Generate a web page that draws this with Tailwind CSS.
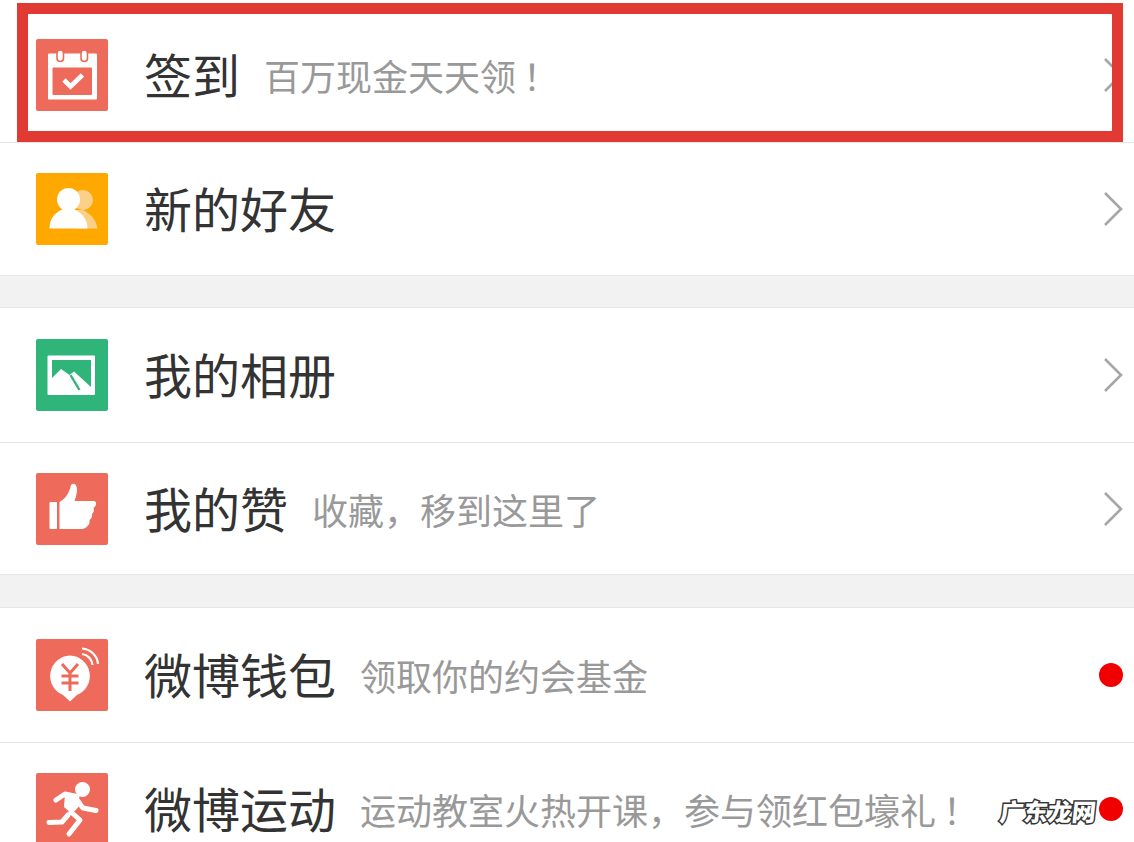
<!DOCTYPE html>
<html lang="zh-CN">
<head>
<meta charset="utf-8">
<script src="https://cdn.jsdelivr.net/npm/@tailwindcss/browser@4"></script>
</head>
<body class="bg-white">
<div class="relative h-[842px] w-[1134px] overflow-hidden bg-white font-['Noto_Sans_CJK_SC','Noto_Sans',sans-serif] text-[#333]">

  <div class="flex h-[143px] items-center border-b border-[#e6e6e6] pt-2 pl-9 pr-[11px]">
    <div class="flex size-[72px] shrink-0 items-center justify-center rounded-[2px] bg-[#ee6a5a]">
      <svg viewBox="0 0 72 72" class="size-[72px]">
        <rect x="12" y="14.5" width="49" height="46" rx="1" fill="#fff"/>
        <rect x="16.5" y="28.5" width="39.5" height="27.5" rx="1" fill="#ee6a5a"/>
        <rect x="21" y="11" width="6.5" height="11.5" rx="3.2" fill="#fff" stroke="#ee6a5a" stroke-width="1.6"/>
        <rect x="45" y="11" width="6.5" height="11.5" rx="3.2" fill="#fff" stroke="#ee6a5a" stroke-width="1.6"/>
        <path d="M28 41 L34.5 47.5 L46.5 36" fill="none" stroke="#fff" stroke-width="4.6"/>
      </svg>
    </div>
    <span class="mb-[5px] ml-[36px] shrink-0 text-[48px] leading-none">签到</span>
    <span class="mb-[1px] ml-[24px] shrink-0 text-[36px] leading-none text-[#999]">百万现金天天领<span class="ml-[7px]">！</span></span>
    <svg viewBox="0 0 20 36" class="ml-auto h-[36px] w-[20px] shrink-0"><path d="M2 2 L18 18 L2 34" fill="none" stroke="#a6a6a6" stroke-width="2.6"/></svg>
  </div>

  <div class="flex h-[133px] items-center border-b border-[#e6e6e6] pl-9 pr-[11px]">
    <div class="size-[72px] shrink-0 rounded-[2px] bg-[#ffa800]">
      <svg viewBox="0 0 72 72" class="size-[72px]">
        <circle cx="47" cy="27" r="10" fill="#fdd08a"/>
        <path d="M40 55.5 H61.5 C60 47 55 41 47 37 L36 37 Z" fill="#fdd08a"/>
        <circle cx="32.5" cy="26.5" r="11.5" fill="#fff"/>
        <path d="M13.5 55.5 C13.5 47 17 41 26 36.5 H39 C47 41 51.5 47 51.5 55.5 Z" fill="#fff"/>
      </svg>
    </div>
    <span class="mb-[4px] ml-[36px] shrink-0 text-[48px] leading-none">新的好友</span>
    <svg viewBox="0 0 20 36" class="ml-auto h-[36px] w-[20px] shrink-0"><path d="M2 2 L18 18 L2 34" fill="none" stroke="#a6a6a6" stroke-width="2.6"/></svg>
  </div>

  <div class="h-[32px] border-b border-[#e6e6e6] bg-[#f2f2f2]"></div>

  <div class="flex h-[135px] items-center border-b border-[#e6e6e6] pl-9 pr-[11px]">
    <div class="size-[72px] shrink-0 rounded-[2px] bg-[#2fb57a]">
      <svg viewBox="0 0 72 72" class="size-[72px]">
        <rect x="11.5" y="16.5" width="47.5" height="39.5" rx="1" fill="#fff"/>
        <path d="M16 21 H55 V48 L38 32.5 L33.5 36 L25 30 L16 39 Z" fill="#2fb57a"/>
        <path d="M34.5 36 L43.5 51" fill="none" stroke="#2fb57a" stroke-width="2.4"/>
      </svg>
    </div>
    <span class="mb-[4px] ml-[36px] shrink-0 text-[48px] leading-none">我的相册</span>
    <svg viewBox="0 0 20 36" class="ml-auto h-[36px] w-[20px] shrink-0"><path d="M2 2 L18 18 L2 34" fill="none" stroke="#a6a6a6" stroke-width="2.6"/></svg>
  </div>

  <div class="flex h-[132px] items-center border-b border-[#e6e6e6] pl-9 pr-[11px]">
    <div class="size-[72px] shrink-0 rounded-[2px] bg-[#ee6a5a]">
      <svg viewBox="0 0 72 72" class="size-[72px]">
        <rect x="13.5" y="29" width="7.5" height="27" rx="1" fill="#fff"/>
        <path d="M23.5 29 C29 26 33 21 35 12 C37 9.5 41 11 41 16 C41 21 39.5 25 38.5 28 H58 C60.5 28.5 60.5 31 59.5 33 L57.5 35 C58.5 37 58 39 56 41 C56.5 43.5 55.5 45.5 53.5 47 C54 50 53 52 50.5 54 C49 55.5 47 56 45 56 H23.5 Z" fill="#fff"/>
      </svg>
    </div>
    <span class="mb-[4px] ml-[36px] shrink-0 text-[48px] leading-none">我的赞</span>
    <span class="ml-[24px] shrink-0 text-[36px] leading-none text-[#999]">收藏，移到这里了</span>
    <svg viewBox="0 0 20 36" class="ml-auto h-[36px] w-[20px] shrink-0"><path d="M2 2 L18 18 L2 34" fill="none" stroke="#a6a6a6" stroke-width="2.6"/></svg>
  </div>

  <div class="h-[33px] border-b border-[#e6e6e6] bg-[#f2f2f2]"></div>

  <div class="flex h-[135px] items-center border-b border-[#e6e6e6] pl-9 pr-[11px]">
    <div class="size-[72px] shrink-0 rounded-[2px] bg-[#ee6a5a]">
      <svg viewBox="0 0 72 72" class="size-[72px]">
        <path d="M34 16.5 A20.5 20.5 0 0 1 41 56 L34 62.5 L27 56 A20.5 20.5 0 0 1 34 16.5 Z" fill="#fff"/>
        <path d="M46 9.5 A17 17 0 0 1 62 25" fill="none" stroke="#fff" stroke-width="2.2"/>
        <path d="M46 15 A12 12 0 0 1 56.5 26" fill="none" stroke="#fff" stroke-width="2.2"/>
        <path d="M26 25 L34 34 L42 25 M25.5 37 H42.5 M25.5 44 H42.5 M34 34 V52" fill="none" stroke="#ee6a5a" stroke-width="3"/>
      </svg>
    </div>
    <span class="mb-[4px] ml-[36px] shrink-0 text-[48px] leading-none">微博钱包</span>
    <span class="ml-[24px] shrink-0 text-[36px] leading-none text-[#999]">领取你的约会基金</span>
    <div class="ml-auto size-6 shrink-0 rounded-full bg-[#f00000]"></div>
  </div>

  <div class="flex h-[132px] items-start pt-[30px] pl-9 pr-[11px]">
    <div class="size-[72px] shrink-0 rounded-[2px] bg-[#ee6a5a]">
      <svg viewBox="0 0 72 72" class="size-[72px]">
        <circle cx="46.5" cy="16.5" r="7.5" fill="#fff"/>
        <path d="M29 20 L41 22 L46 30 L36 41 L28 34 Z" fill="#fff"/>
        <path d="M20 27 L29 21 L41 23.5 L35 39 L44 47 L33 61 M41 27 L47 35 L60 37.5 M32 42 L26 49 L13 49.5" fill="none" stroke="#fff" stroke-width="5" stroke-linecap="round" stroke-linejoin="round"/>
      </svg>
    </div>
    <span class="ml-[36px] mt-[10px] shrink-0 text-[48px] leading-none">微博运动</span>
    <span class="ml-[24px] mt-[18px] shrink-0 text-[36px] leading-none text-[#999]">运动教室火热开课，参与领红包壕礼<span class="ml-[7px]">！</span></span>
    <div class="ml-auto mt-[24px] size-6 shrink-0 rounded-full bg-[#f00000]"></div>
  </div>

  <div class="pointer-events-none absolute left-[17px] top-[3px] h-[139px] w-[1106px] border-[11px] border-[#e03a33]"></div>
  <div class="absolute left-[1000px] top-[795px] -skew-x-6 text-[24px] leading-[32px] font-black text-white [-webkit-text-stroke:3px_#333] [paint-order:stroke_fill]">广东龙网</div>
</div>
</body>
</html>
